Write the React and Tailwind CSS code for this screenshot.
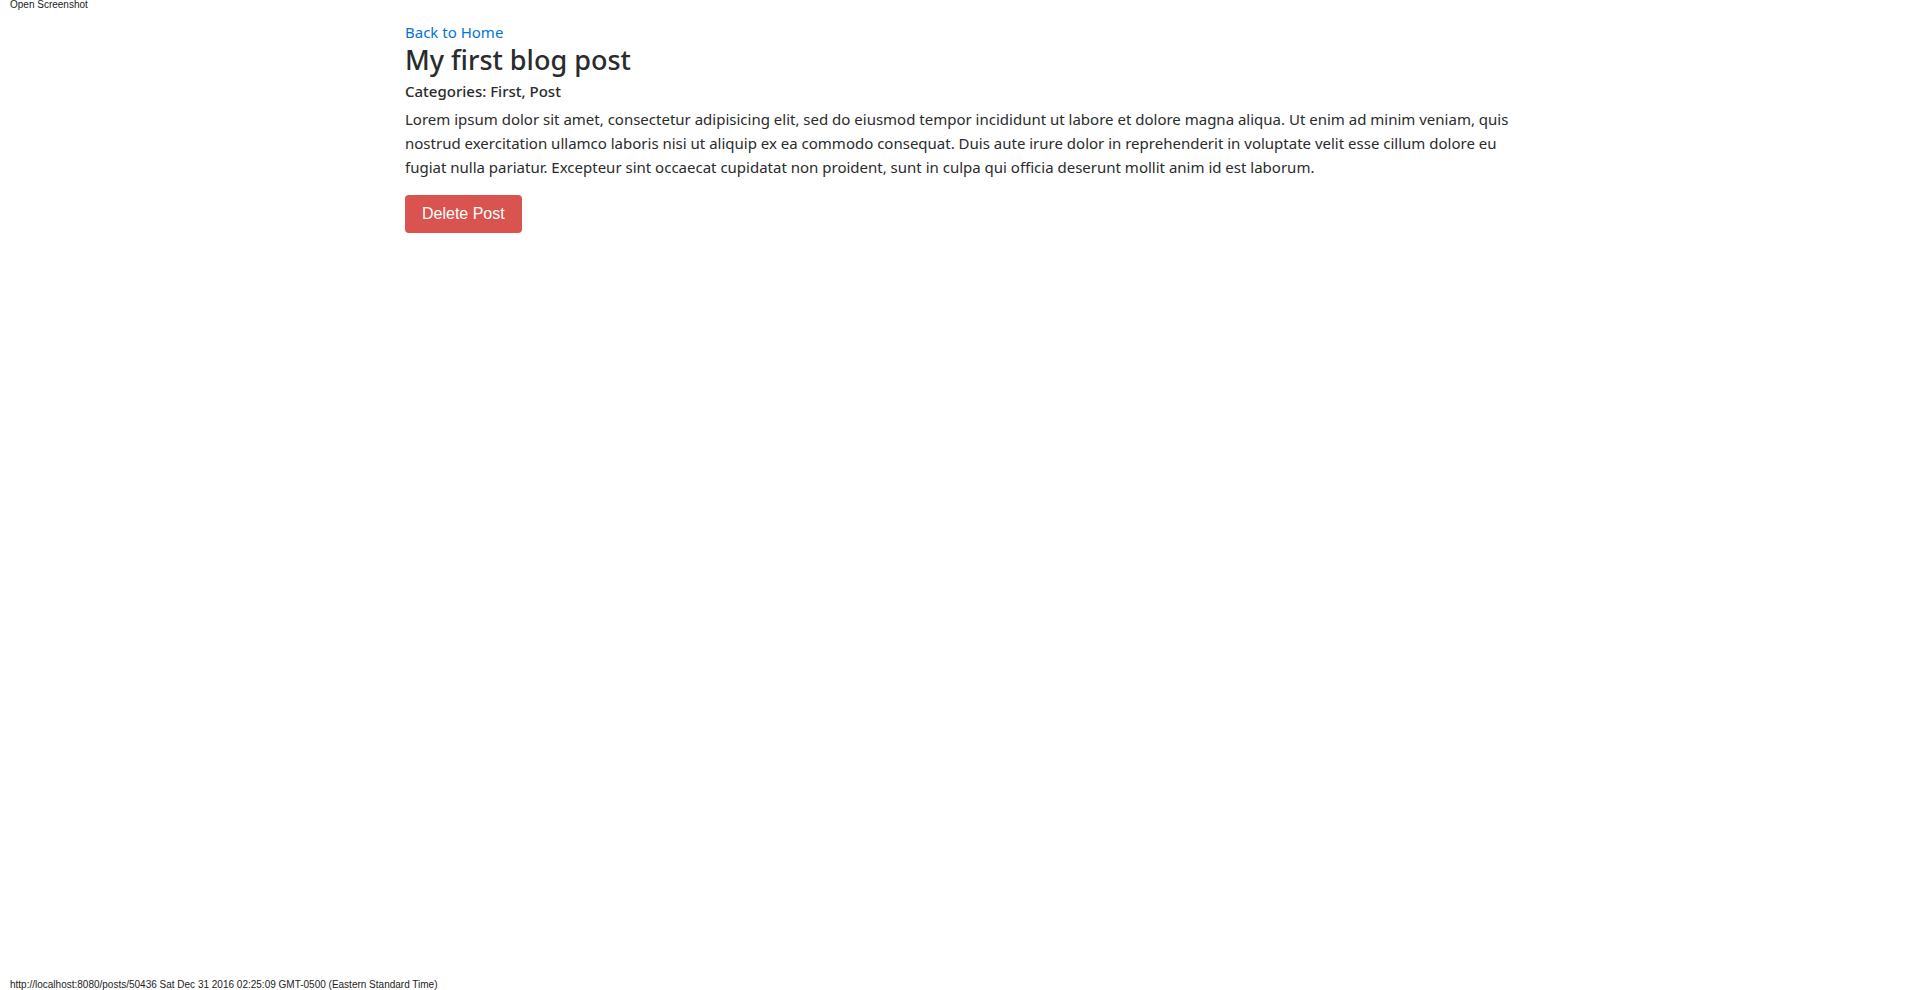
export default function App() {
  return (
    <div className="flex min-h-screen flex-col bg-white text-[#292b2c]">
      <header className="h-[10px] px-[10px] font-['Liberation_Sans',sans-serif] text-[10px] leading-[10px] text-[#222222]">
        Open Screenshot
      </header>
      <main className="mx-auto w-full max-w-[1140px] flex-1 px-[15px] pt-[10px] font-['Noto_Sans',sans-serif] text-[15px] leading-6">
        <a href="#home" className="block text-[#0275d8]">Back to Home</a>
        <h1 className="mb-1.5 text-[27px] font-medium leading-8">My first blog post</h1>
        <h2 className="mb-[7px] font-medium leading-[18px]">Categories: First, Post</h2>
        <p className="mb-4">
          Lorem ipsum dolor sit amet, consectetur adipisicing elit, sed do eiusmod tempor incididunt ut labore et dolore magna aliqua. Ut enim ad minim veniam, quis nostrud exercitation ullamco laboris nisi ut aliquip ex ea commodo consequat. Duis aute irure dolor in reprehenderit in voluptate velit esse cillum dolore eu fugiat nulla pariatur. Excepteur sint occaecat cupidatat non proident, sunt in culpa qui officia deserunt mollit anim id est laborum.
        </p>
        <button type="button" className="rounded bg-[#d9534f] px-[17px] py-[9px] font-['Liberation_Sans',sans-serif] text-base leading-5 text-white">
          Delete Post
        </button>
      </main>
      <footer className="px-[10px] font-['Liberation_Sans',sans-serif] text-[10px] leading-[10px] text-[#222222]">
        http://localhost:8080/posts/50436 Sat Dec 31 2016 02:25:09 GMT-0500 (Eastern Standard Time)
      </footer>
    </div>
  );
}
